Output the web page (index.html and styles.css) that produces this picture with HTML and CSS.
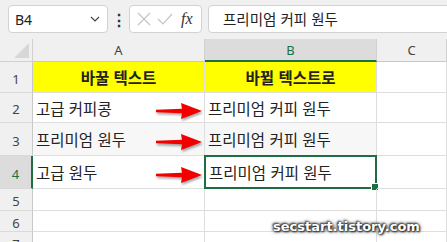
FILE: index.html
```html
<!DOCTYPE html>
<html lang="ko">
<head>
    <meta charset="UTF-8">
    <title>Excel sheet</title>
    <link rel="stylesheet" href="styles.css">
</head>
<body>
  <div class="toolbar">
    <div class="name-box">
      <span>B4</span>
      <svg class="chevron" width="10" height="6" viewBox="0 0 10 6"><path d="M1 1 L5 5 L9 1" fill="none" stroke="#444" stroke-width="1.2"/></svg>
    </div>
    <span class="dots">&#8942;</span>
    <div class="fx-box">
      <svg width="14" height="14" viewBox="0 0 14 14"><path d="M1 1 L13 13 M13 1 L1 13" stroke="#c4c4c4" stroke-width="1.2"/></svg>
      <svg width="16" height="14" viewBox="0 0 16 14"><path d="M1 7 L6 12 L15 2" fill="none" stroke="#c4c4c4" stroke-width="1.2"/></svg>
      <span class="fx">fx</span>
    </div>
    <div class="formula-input">프리미엄 커피 원두</div>
  </div>

  <div class="sheet">
    <div class="corner"><span class="triangle"></span></div>
    <div class="col-head">A</div>
    <div class="col-head selected">B</div>
    <div class="col-head">C</div>

    <div class="row-head">1</div>
    <div class="cell head-cell">바꿀 텍스트</div>
    <div class="cell head-cell">바뀔 텍스트로</div>
    <div class="cell"></div>

    <div class="row-head">2</div>
    <div class="cell">고급 커피콩<svg class="arrow" width="50" height="20" viewBox="0 0 50 20"><path d="M1 8.7 L27 7.8 L26 2 L47 10 L26 18 L27 12.2 L1 11.3 Z" fill="#f20000"/></svg></div>
    <div class="cell">프리미엄 커피 원두</div>
    <div class="cell"></div>

    <div class="row-head">3</div>
    <div class="cell band">프리미엄 원두<svg class="arrow" width="50" height="20" viewBox="0 0 50 20"><path d="M1 8.7 L27 7.8 L26 2 L47 10 L26 18 L27 12.2 L1 11.3 Z" fill="#f20000"/></svg></div>
    <div class="cell band">프리미엄 커피 원두</div>
    <div class="cell"></div>

    <div class="row-head selected">4</div>
    <div class="cell">고급 원두<svg class="arrow" width="50" height="20" viewBox="0 0 50 20"><path d="M1 8.7 L27 7.8 L26 2 L47 10 L26 18 L27 12.2 L1 11.3 Z" fill="#f20000"/></svg></div>
    <div class="cell active">프리미엄 커피 원두<span class="handle"></span></div>
    <div class="cell"></div>

    <div class="row-head">5</div>
    <div class="cell"></div>
    <div class="cell"></div>
    <div class="cell"></div>

    <div class="row-head">6</div>
    <div class="cell"></div>
    <div class="cell"></div>
    <div class="cell"></div>

    <div class="row-head">7</div>
    <div class="cell"></div>
    <div class="cell"></div>
    <div class="cell"></div>
  </div>

  <div class="watermark">secstart.tistory.com</div>
</body>
</html>
```

FILE: styles.css
```css
body {
    margin: 0;
    overflow: hidden;
    background: #fff;
    font-family: "Noto Sans CJK KR", "Noto Sans", sans-serif;
    color: #222;
}

.toolbar {
    height: 39px;
    box-sizing: border-box;
    background: #f0f0f0;
    display: flex;
    align-items: flex-start;
    padding: 5px 0 0 8px;
}

.name-box {
    width: 100px;
    height: 28px;
    box-sizing: border-box;
    background: #fff;
    border: 1px solid #d2d2d2;
    border-radius: 4px;
    display: flex;
    align-items: center;
    justify-content: space-between;
    padding: 0 7px 0 6px;
    font-family: "Noto Sans", sans-serif;
    font-size: 14px;
    color: #222;
}

.dots {
    width: 21px;
    text-align: center;
    font-size: 16px;
    line-height: 28px;
    color: #333;
    font-weight: bold;
}

.fx-box {
    width: 73px;
    height: 28px;
    box-sizing: border-box;
    background: #fff;
    border: 1px solid #d2d2d2;
    border-radius: 4px;
    display: flex;
    align-items: center;
    gap: 6px;
    padding: 0 0 0 7px;
}

.fx {
    font-family: "Liberation Serif", serif;
    font-style: italic;
    font-size: 16px;
    color: #333;
    margin-left: 2px;
}

.formula-input {
    flex: 1;
    margin-left: 6px;
    margin-right: -10px;
    height: 28px;
    box-sizing: border-box;
    background: #fff;
    border: 1px solid #d2d2d2;
    border-radius: 4px;
    padding-left: 14px;
    font-size: 14.5px;
    line-height: 25px;
}

.sheet {
    display: grid;
    grid-template-columns: 33px 172px 172px 1fr;
    grid-template-rows: 23px 31px 30px 33px 33px 22px 21px 21px;
}

.sheet > div {
    box-sizing: border-box;
    position: relative;
}

.corner {
    background: #f0f0f0;
    border-right: 1px solid #d0d0d0;
    border-bottom: 1px solid #d0d0d0;
}

.triangle {
    position: absolute;
    right: 3px;
    bottom: 3px;
    width: 0;
    height: 0;
    border-left: 15px solid transparent;
    border-bottom: 15px solid #d7d7d7;
}

.col-head {
    background: #f0f0f0;
    border-right: 1px solid #d0d0d0;
    border-bottom: 1px solid #c8c8c8;
    text-align: center;
    font-family: "Noto Sans", sans-serif;
    font-size: 13px;
    line-height: 22px;
    color: #444;
}

.col-head.selected {
    background: #dcdcdc;
    border-bottom: 2px solid #1e6e42;
    color: #1e6e42;
}

.row-head {
    background: #f0f0f0;
    border-right: 1px solid #c8c8c8;
    border-bottom: 1px solid #dadada;
    font-family: "Noto Sans", sans-serif;
    font-size: 13px;
    color: #444;
    display: flex;
    align-items: center;
    justify-content: center;
    padding-top: 3px;
}

.row-head.selected {
    background: #dcdcdc;
    border-right: 2px solid #1e6e42;
    color: #1e6e42;
}

.cell {
    border-right: 1px solid #dedede;
    border-bottom: 1px solid #dedede;
    font-size: 15.5px;
    display: flex;
    align-items: center;
    padding-left: 3px;
    white-space: nowrap;
}

.cell.band {
    background: #f7f7f7;
}

.head-cell {
    background: #ffff00;
    justify-content: center;
    font-weight: bold;
    padding-left: 0;
}

.cell.active {
    border: 2px solid #1e6e42;
    margin: -1px 0 0 -1px;
    padding-left: 3px;
}

.handle {
    position: absolute;
    right: -4px;
    bottom: -4px;
    width: 6px;
    height: 6px;
    background: #1e6e42;
    border: 1px solid #fff;
}

.arrow {
    position: absolute;
    right: -1px;
    top: 50%;
    margin-top: -7px;
    filter: drop-shadow(1px 2px 1px rgba(0, 0, 0, 0.35));
}

.watermark {
    position: absolute;
    left: 273px;
    top: 219px;
    font-family: "DejaVu Sans", sans-serif;
    font-weight: bold;
    font-size: 13px;
    color: #fff;
    text-shadow: 0 0 2px #222, 1px 1px 2px #222, -1px -1px 2px #444, 0 0 4px #333;
}
```
